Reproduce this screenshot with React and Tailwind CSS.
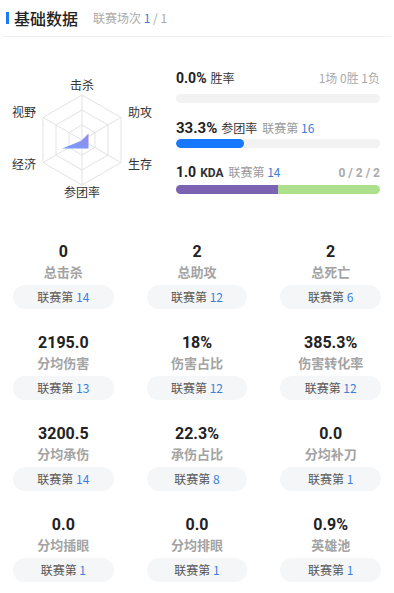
import React from 'react'

const cn = '"Noto Sans CJK SC", "Noto Sans", sans-serif'
const num = 'Roboto, "Noto Sans CJK SC", sans-serif'

const cells = [
  { v: '0', label: '总击杀', rank: 14 },
  { v: '2', label: '总助攻', rank: 12 },
  { v: '2', label: '总死亡', rank: 6 },
  { v: '2195.0', label: '分均伤害', rank: 13 },
  { v: '18%', label: '伤害占比', rank: 12 },
  { v: '385.3%', label: '伤害转化率', rank: 12 },
  { v: '3200.5', label: '分均承伤', rank: 14 },
  { v: '22.3%', label: '承伤占比', rank: 8 },
  { v: '0.0', label: '分均补刀', rank: 1 },
  { v: '0.0', label: '分均插眼', rank: 1 },
  { v: '0.0', label: '分均排眼', rank: 1 },
  { v: '0.9%', label: '英雄池', rank: 1 },
]

function hex(cx, cy, r) {
  const pts = []
  for (let i = 0; i < 6; i++) {
    const a = (-90 + i * 60) * Math.PI / 180
    pts.push(`${(cx + r * Math.cos(a)).toFixed(1)},${(cy + r * Math.sin(a)).toFixed(1)}`)
  }
  return pts.join(' ')
}

function Radar() {
  const cx = 82, cy = 103
  const spokes = []
  for (let i = 0; i < 6; i++) {
    const a = (-90 + i * 60) * Math.PI / 180
    spokes.push([cx + 45 * Math.cos(a), cy + 45 * Math.sin(a)])
  }
  const labels = [
    ['击杀', 82, 47.5], ['助攻', 140, 74.5], ['生存', 140, 126],
    ['参团率', 82, 154], ['经济', 24, 126], ['视野', 24, 74.5],
  ]
  return (
    <svg width="165" height="170" className="shrink-0">
      <defs>
        <linearGradient id="rg" x1="1" y1="0" x2="0" y2="1">
          <stop offset="0" stopColor="#9a86f0" />
          <stop offset="1" stopColor="#6fa2f7" />
        </linearGradient>
      </defs>
      {[45, 30, 15].map(r => (
        <polygon key={r} points={hex(cx, cy, r)} fill="none" stroke="#e3e3e3" strokeWidth="1" />
      ))}
      {spokes.map(([x, y], i) => (
        <line key={i} x1={cx} y1={cy} x2={x} y2={y} stroke="#e3e3e3" strokeWidth="1" />
      ))}
      <polygon points="81,104 88.5,96.5 88.5,111.5 82,111.5 62,111.5" fill="url(#rg)" />
      {labels.map(([t, x, y]) => (
        <text key={t} x={x} y={y} textAnchor="middle" dominantBaseline="central" fontSize="12" fill="#333" style={{ fontFamily: cn }}>{t}</text>
      ))}
    </svg>
  )
}

export default function App() {
  return (
    <div className="w-[394px] h-[593px] bg-white overflow-hidden" style={{ fontFamily: cn }}>
      <div className="mx-[3px] h-[37px] border-b border-[#f0f0f0] flex items-center">
        <div className="ml-[3px] w-[3px] h-[12px] bg-[#1a7cf5]" />
        <span className="ml-[5px] text-[16px] leading-none text-[#222] font-medium">基础数据</span>
        <span className="ml-[15px] text-[12px] text-[#aaa]">联赛场次 <span className="text-[#3a7fd8]">1</span> / 1</span>
      </div>

      <div className="flex h-[170px]">
        <Radar />
        <div className="ml-[11px] w-[204px] flex flex-col">
          <div className="mt-[31px] h-[20px] flex items-center justify-between">
            <div className="flex items-baseline">
              <span className="text-[14px] font-bold text-[#222]" style={{ fontFamily: num }}>0.0%</span>
              <span className="ml-[4px] text-[12px] text-[#333]">胜率</span>
            </div>
            <span className="text-[12px] text-[#aaa]">1场 0胜 1负</span>
          </div>
          <div className="mt-[6px] h-[9px] rounded-full bg-[#f2f2f2]" />

          <div className="mt-[14px] h-[20px] flex items-baseline">
            <span className="text-[15px] font-bold text-[#222]" style={{ fontFamily: num }}>33.3%</span>
            <span className="ml-[4px] text-[12px] text-[#333]">参团率</span>
            <span className="ml-[5px] text-[12px] text-[#999]">联赛第 <span className="text-[#3a7fd8]">16</span></span>
          </div>
          <div className="mt-[2px] h-[9px] rounded-full bg-[#f2f2f2] overflow-hidden">
            <div className="h-full w-[68px] rounded-full bg-[#1677ff]" />
          </div>

          <div className="mt-[14px] h-[20px] flex items-baseline justify-between">
            <div className="flex items-baseline">
              <span className="text-[14px] font-bold text-[#222]" style={{ fontFamily: num }}>1.0</span>
              <span className="ml-[4px] text-[12px] font-bold text-[#333]" style={{ fontFamily: num }}>KDA</span>
              <span className="ml-[5px] text-[12px] text-[#999]">联赛第 <span className="text-[#3a7fd8]">14</span></span>
            </div>
            <span className="text-[12px] font-bold text-[#aaa]" style={{ fontFamily: num }}>0 / 2 / 2</span>
          </div>
          <div className="mt-[3px] h-[9px] rounded-full overflow-hidden flex">
            <div className="h-full w-1/2 bg-[#7b62b3]" />
            <div className="h-full w-1/2 bg-[#ade08c]" />
          </div>
        </div>
      </div>

      <div className="mt-[35px] px-[13px] grid grid-cols-3 gap-x-[33px] gap-y-[24px]">
        {cells.map((c, i) => (
          <div key={i} className="flex flex-col items-center">
            <div className="h-[20px] leading-[20px] text-[16px] font-bold text-[#222]" style={{ fontFamily: num }}>{c.v}</div>
            <div className="h-[20px] leading-[20px] text-[13px] font-semibold text-[#a3a3a3]">{c.label}</div>
            <div className="mt-[3px] w-full h-[24px] rounded-full bg-[#f5f6f8] flex items-center justify-center text-[12px] text-[#555]">
              联赛第&nbsp;<span className="text-[#3a7fd8]">{c.rank}</span>
            </div>
          </div>
        ))}
      </div>
    </div>
  )
}
